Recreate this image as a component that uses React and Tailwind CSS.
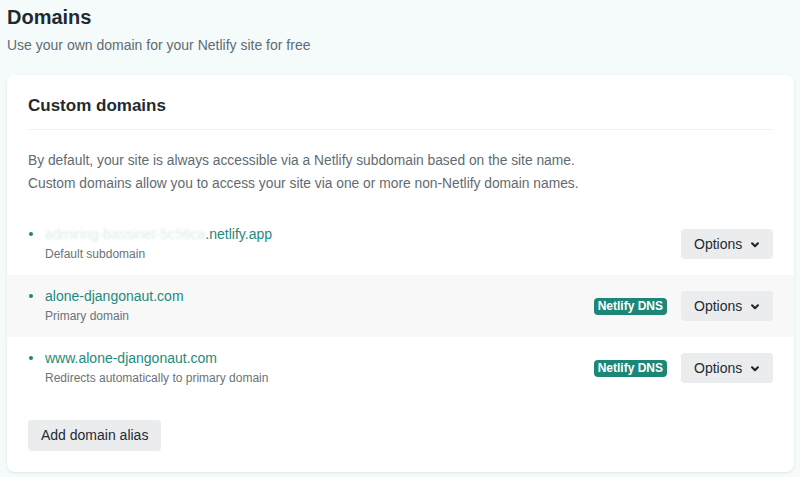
import React from "react";

function Chevron() {
  return (
    <svg width="8" height="6" viewBox="0 0 8 6" className="ml-[9px] mt-[1px]">
      <path d="M1.1 1.3 L4 4.2 L6.9 1.3" fill="none" stroke="#1f2a33" strokeWidth="2.2" strokeLinecap="round" strokeLinejoin="round" />
    </svg>
  );
}

function OptionsButton() {
  return (
    <button className="flex items-center h-[30px] w-[92px] pl-[13px] rounded-[4px] bg-[#ebecee] text-[14px] text-[#1f2a33]">
      Options
      <Chevron />
    </button>
  );
}

function Badge() {
  return (
    <span className="inline-flex items-center h-[17px] px-[4px] rounded-[4px] bg-[#1d8677] text-white text-[12px] font-bold leading-none">
      Netlify DNS
    </span>
  );
}

function Row({ domain, sub, gray, dns, blurred }) {
  return (
    <div className={`flex items-center h-[62px] px-[21px] ${gray ? "bg-[#f8f8f8]" : ""}`}>
      <div className="flex flex-1 items-start">
        <span className="w-[4px] h-[4px] rounded-full bg-[#1d8677] mt-[8px] mr-[12px] ml-[1px]" />
        <div className="flex flex-col">
          <div className="text-[14px] leading-[20px] text-[#1e8a7b]">
            {blurred ? (
              <>
                <span className="text-[#dcedeb] blur-[0.8px]">admiring-bassinet-5c56ca</span>
                <span>.netlify.app</span>
              </>
            ) : (
              domain
            )}
          </div>
          <div className="text-[12px] leading-[21px] text-[#6b7378]">{sub}</div>
        </div>
      </div>
      {dns && (
        <div className="mr-[14px] flex items-center">
          <Badge />
        </div>
      )}
      <OptionsButton />
    </div>
  );
}

export default function App() {
  return (
    <div
      className="w-[800px] h-[477px] bg-[#f5fbfb] overflow-hidden"
      style={{ fontFamily: '"Liberation Sans", Arial, sans-serif' }}
    >
      <div className="px-[7px] pt-[5px]">
        <h1 className="text-[20px] leading-[24px] font-bold text-[#1f2a33]">Domains</h1>
        <p className="mt-[7px] text-[14px] leading-[18px] text-[#5f6b72]">
          Use your own domain for your Netlify site for free
        </p>
      </div>
      <div className="ml-[7px] mr-[6px] mt-[21px] bg-white rounded-[8px] shadow-[0_1px_3px_rgba(0,40,50,0.10)] pb-[21px]">
        <div className="px-[21px] pt-[19px]">
          <h2 className="text-[17px] leading-[24px] font-bold text-[#1f2a33]">Custom domains</h2>
          <div className="mt-[11px] h-px bg-[#f0f2f3]" />
          <div className="mt-[19px] text-[13.8px] leading-[23px] text-[#5f6b72]">
            <p>By default, your site is always accessible via a Netlify subdomain based on the site name.</p>
            <p>Custom domains allow you to access your site via one or more non-Netlify domain names.</p>
          </div>
        </div>
        <div className="mt-[18px]">
          <Row blurred sub="Default subdomain" />
          <Row gray dns domain="alone-djangonaut.com" sub="Primary domain" />
          <Row dns domain="www.alone-djangonaut.com" sub="Redirects automatically to primary domain" />
        </div>
        <div className="px-[21px] mt-[21px]">
          <button className="h-[31px] px-[13px] rounded-[4px] bg-[#ebecee] text-[14px] text-[#1f2a33]">
            Add domain alias
          </button>
        </div>
      </div>
    </div>
  );
}
